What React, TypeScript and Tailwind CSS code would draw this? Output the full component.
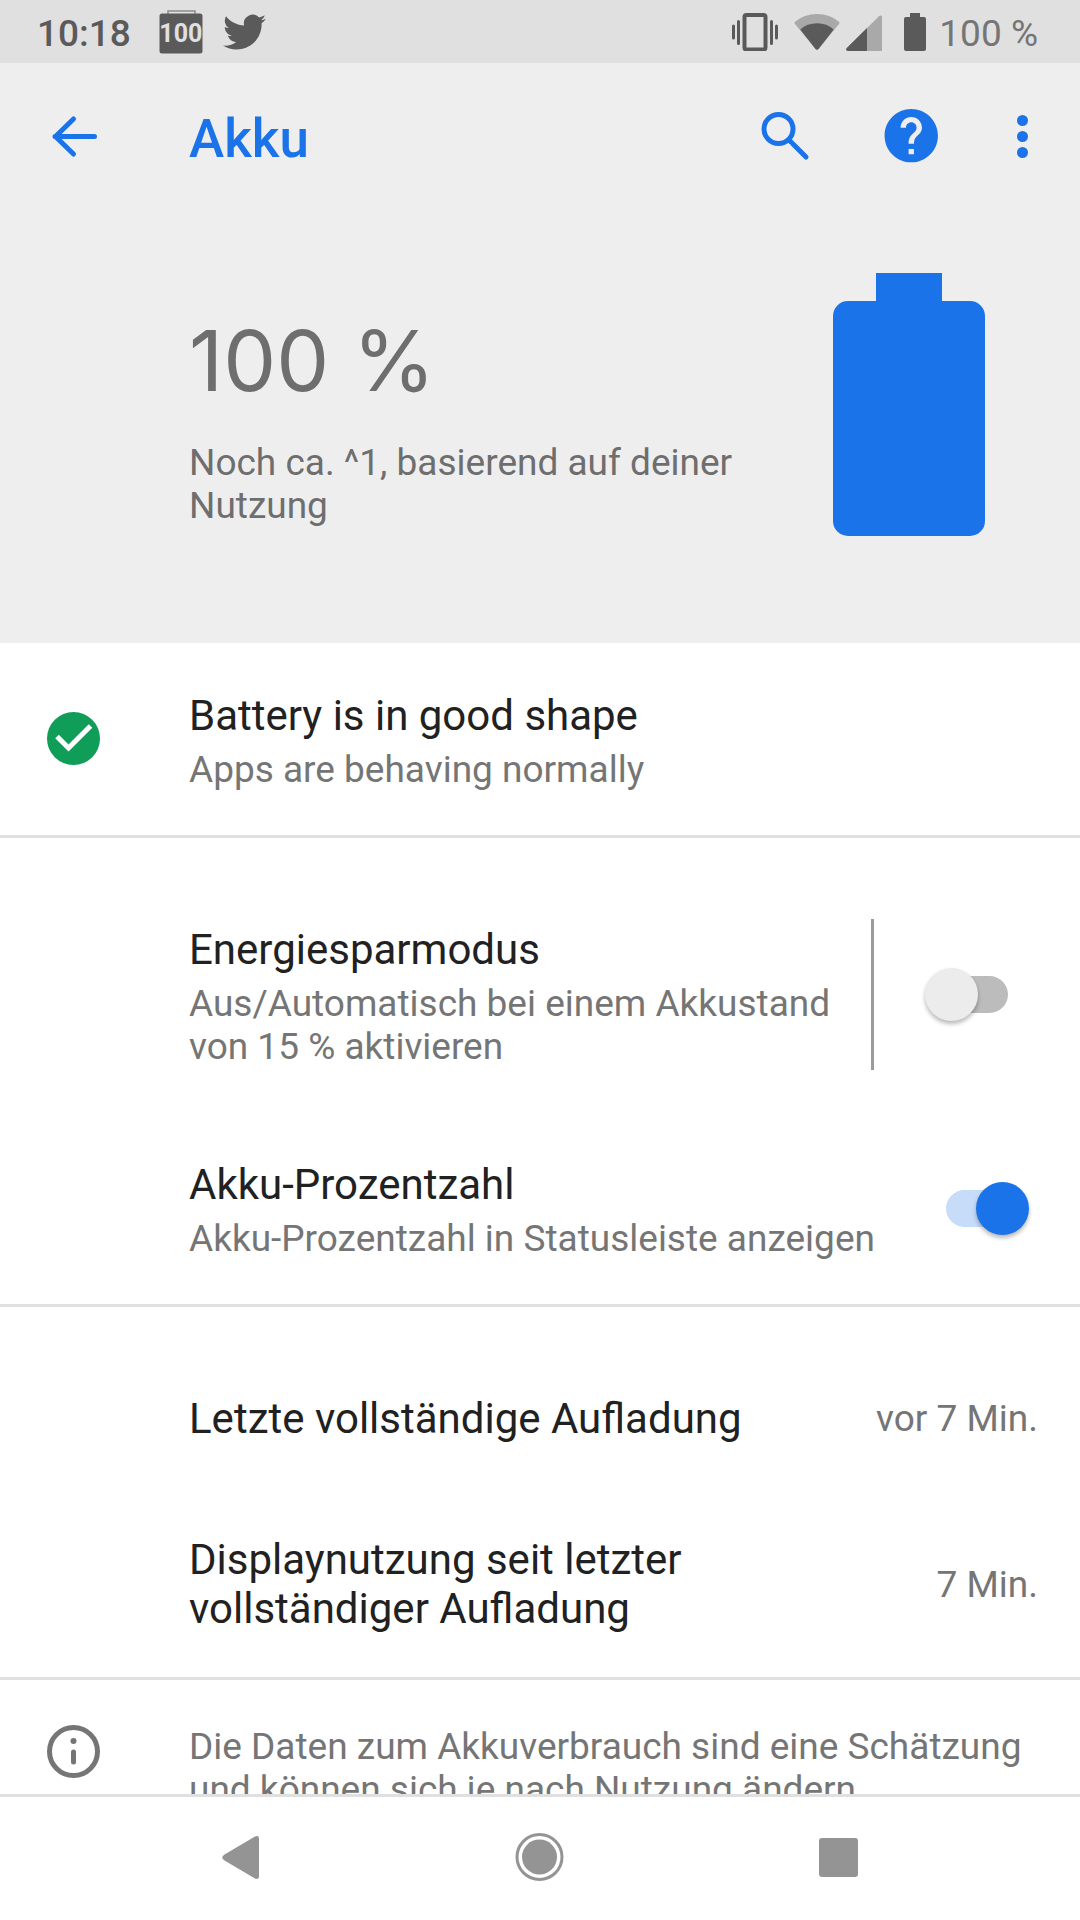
import React, { useState } from "react";

const TITLE = "text-[42px] leading-[49px] text-[#212121]";
const BODY = "text-[37px] leading-[43px] text-[#757575]";

function StatusBar() {
  return (
    <div className="flex h-[63px] shrink-0 items-center justify-between bg-[#e0e0e0] pl-[37px] pr-[42px] text-[37px] leading-[43px]">
      <div className="flex items-center">
        <span className="pt-[3px] font-medium text-[#5a5a5a]">10:18</span>
        <span className="relative ml-7 block h-11 w-11">
          <svg viewBox="0 0 44 44" className="h-11 w-11" fill="none">
            <path d="M9 4V1h27v3" stroke="#8a8a8a" strokeWidth="1.5" />
            <rect x="0.5" y="3.5" width="43" height="40" rx="2.5" fill="#5a5a5a" />
          </svg>
          <span className="absolute inset-0 flex items-center justify-center pt-1 text-[25px] leading-none font-bold text-[#e0e0e0]">
            100
          </span>
        </span>
        <svg viewBox="0 0 24 20" className="ml-5 mt-px h-[36px] w-[43px]" fill="#5a5a5a">
          <path d="M23.95 2.6c-.9.4-1.8.66-2.8.78 1-.6 1.8-1.56 2.16-2.7-.95.56-2 .97-3.12 1.2A4.92 4.92 0 0 0 11.8 6.35C7.7 6.16 4.1 4.2 1.67 1.2A4.9 4.9 0 0 0 3.2 7.75c-.8-.02-1.57-.24-2.23-.6v.06c0 2.38 1.7 4.37 3.95 4.82-.7.2-1.46.23-2.2.09a4.93 4.93 0 0 0 4.6 3.41A9.9 9.9 0 0 1 0 17.57a13.94 13.94 0 0 0 7.55 2.2c9.05 0 14-7.5 14-14 0-.2 0-.42-.02-.63.96-.7 1.8-1.56 2.42-2.54Z" />
        </svg>
      </div>
      <div className="flex items-center">
        <svg viewBox="0 0 46 38" className="h-[38px] w-[46px]" fill="none" stroke="#5a5a5a">
          <rect x="12.5" y="2" width="21" height="34.5" rx="2" strokeWidth="4" />
          <path d="M6.5 8.5v22M39.5 8.5v22M1.5 13v12M44.5 13v12" strokeWidth="3" strokeLinecap="round" />
        </svg>
        <svg viewBox="0 0 46 38" className="ml-4 h-[38px] w-[46px]">
          <path d="M1 8.8Q10 1 23 1t22 7.8q.8 1 .2 2L24.5 36q-1.5 1.5-3 0L.8 10.8q-.6-1 .2-2Z" fill="#a9a9a9" />
          <path d="M6.3 16.5Q13 10.2 23 10.2t16.7 6.3L24.5 36q-1.5 1.5-3 0Z" fill="#5a5a5a" />
        </svg>
        <svg viewBox="0 0 36 36" className="ml-[6px] mt-[2px] h-[36px] w-[36px]">
          <path d="M36 36H2q-3-.6-1.200-3L33 1.200Q35.500-.5 36 2Z" fill="#a9a9a9" />
          <path d="M21 13v23H2q-3-.6-1.200-3Z" fill="#5a5a5a" />
        </svg>
        <svg viewBox="0 0 22 38" className="ml-[22px] h-[38px] w-[22px]" fill="#5a5a5a">
          <path d="M6 0h10v4h4q2 0 2 2v30q0 2-2 2H2q-2 0-2-2V6q0-2 2-2h4Z" />
        </svg>
        <span className="ml-[13px] pt-[3px] text-[#757575]">100 %</span>
      </div>
    </div>
  );
}

function AppBar() {
  return (
    <header className="flex h-[147px] shrink-0 items-center bg-[#eeeeee] pl-[42px] pr-[28px]">
      <button type="button" aria-label="Zurück" className="h-[63px] w-[63px]">
        <svg viewBox="0 0 63 63" fill="none" stroke="#1a73e8" strokeWidth="5" strokeLinecap="round" strokeLinejoin="round">
          <path d="M52.5 31.5H13M31.5 14 13.5 31.500l18 17.500" />
        </svg>
      </button>
      <h1 className="ml-[84px] flex-1 pt-1 text-[53px] leading-[62px] font-medium text-[#1a73e8]">Akku</h1>
      <button type="button" aria-label="Suchen" className="h-[64px] w-[64px]">
        <svg viewBox="0 0 64 64" fill="none" stroke="#1a73e8" strokeWidth="5">
          <circle cx="25.5" cy="24" r="14.5" />
          <path d="m35.5 34.5 3 3" />
          <path d="m39.5 38.5 13.5 13.5" strokeLinecap="round" />
        </svg>
      </button>
      <button type="button" aria-label="Hilfe" className="ml-[62px] h-[64px] w-[64px]">
        <svg viewBox="-0.1 0.5 24 24" fill="#1a73e8">
          <path d="M12 2C6.480 2 2 6.480 2 12s4.480 10 10 10 10-4.480 10-10S17.520 2 12 2zm1 17h-2v-2h2v2zm2.070-7.750-.9.920C13.450 12.900 13 13.500 13 15h-2v-.5c0-1.100.450-2.100 1.170-2.830l1.240-1.260c.370-.360.590-.860.590-1.410 0-1.100-.9-2-2-2s-2 .9-2 2H8c0-2.210 1.790-4 4-4s4 1.790 4 4c0 .880-.360 1.680-.930 2.250z" />
        </svg>
      </button>
      <button type="button" aria-label="Weitere Optionen" className="ml-[65px] h-[60px] w-[44px]">
        <svg viewBox="0 0 44 60" fill="#1a73e8">
          <circle cx="14.5" cy="13.5" r="5.5" />
          <circle cx="14.5" cy="29.5" r="5.5" />
          <circle cx="14.5" cy="45.5" r="5.5" />
        </svg>
      </button>
    </header>
  );
}

function Hero() {
  return (
    <section className="flex items-start justify-between bg-[#eeeeee] pt-[63px] pr-[95px] pb-[107px] pl-[189px]">
      <div className="min-w-0 flex-1 pt-[46px] text-[#6e6e6e]">
        <p className="font-['Inter',sans-serif] text-[84px] leading-[84px]">100 %</p>
        <p className="mt-[38px] text-[37px] leading-[43px]">Noch ca. ^1, basierend auf deiner Nutzung</p>
      </div>
      <svg viewBox="0 0 152 263" className="h-[263px] w-[152px] shrink-0" fill="#1a73e8" role="img" aria-label="Akku 100 %">
        <rect x="43" width="66" height="40" />
        <rect y="28" width="152" height="235" rx="15" />
      </svg>
    </section>
  );
}

function Switch({ id, initial }: { id: string; initial: boolean }) {
  const [on, setOn] = useState(initial);
  return (
    <input
      id={id}
      type="checkbox"
      role="switch"
      checked={on}
      onChange={() => setOn(!on)}
      className="relative h-[53px] w-[83px] shrink-0 cursor-pointer appearance-none before:absolute before:top-2 before:right-0 before:h-[37px] before:w-[74px] before:rounded-full before:bg-[#bcbcbc] after:absolute after:top-0 after:left-0 after:h-[53px] after:w-[53px] after:rounded-full after:bg-[#ececec] after:shadow-[0_3px_4px_rgba(0,0,0,0.28)] checked:before:right-auto checked:before:left-0 checked:before:bg-[#c6dcf9] checked:after:right-0 checked:after:left-auto checked:after:bg-[#1a73e8]"
    />
  );
}

function ValueRow({ title, value }: { title: string; value: string }) {
  return (
    <div className="flex items-center justify-between pt-12 pr-[42px] pb-11 pl-[189px]">
      <dt className={`${TITLE} max-w-[70%]`}>{title}</dt>
      <dd className={`${BODY} shrink-0`}>{value}</dd>
    </div>
  );
}

function NavBar() {
  return (
    <nav className="flex h-[126px] shrink-0 items-center justify-center gap-[239px] border-t-[3px] border-[#e0e0e0] bg-white">
      <button type="button" aria-label="Zurück" className="h-[60px] w-[60px]">
        <svg viewBox="0 0 60 60" fill="#949494">
          <path d="M13.5 25.5 44 7.500q4-1.500 4 2v38q0 3.500-4 2L13.500 31.500q-4.500-3 0-6Z" />
        </svg>
      </button>
      <button type="button" aria-label="Startbildschirm" className="h-[60px] w-[60px]">
        <svg viewBox="0 0 60 60" fill="#949494">
          <circle cx="29.5" cy="28" r="22.5" fill="none" stroke="#949494" strokeWidth="3" />
          <circle cx="29.5" cy="28" r="17.5" />
        </svg>
      </button>
      <button type="button" aria-label="Letzte Apps" className="h-[60px] w-[60px]">
        <svg viewBox="0 0 60 60" fill="#949494">
          <rect x="10" y="9" width="39" height="39" rx="3" />
        </svg>
      </button>
    </nav>
  );
}

export default function App() {
  return (
    <div className="flex h-screen flex-col bg-white font-['Roboto',sans-serif]">
      <StatusBar />
      <AppBar />
      <main className="min-h-0 flex-1 overflow-y-auto [scrollbar-width:none]">
        <Hero />

        <section className="flex items-center border-b-[3px] border-[#e0e0e0] pt-12 pr-[42px] pb-11">
          <div className="flex w-[189px] shrink-0 pl-[42px]">
            <svg viewBox="0 0 63 63" className="h-[63px] w-[63px]">
              <circle cx="31.5" cy="28.5" r="26.5" fill="#0f9d58" />
              <path d="M15 26.500 26.500 38l22-22" fill="none" stroke="#fff" strokeWidth="5" />
            </svg>
          </div>
          <div>
            <h2 className={TITLE}>Battery is in good shape</h2>
            <p className={`${BODY} mt-2`}>Apps are behaving normally</p>
          </div>
        </section>

        <section className="border-b-[3px] border-[#e0e0e0] pt-[39px]">
          <div className="flex items-center pr-[72px] pl-[189px]">
            <label htmlFor="saver" className="flex-1 pt-12 pb-11">
              <span className={`${TITLE} block`}>Energiesparmodus</span>
              <span className={`${BODY} mt-2 block`}>Aus/Automatisch bei einem Akkustand von 15 % aktivieren</span>
            </label>
            <span className="mr-[51px] ml-6 h-[151px] w-[3px] shrink-0 bg-[#9b9b9b]" />
            <Switch id="saver" initial={false} />
          </div>
          <div className="flex items-center pr-[51px] pl-[189px]">
            <label htmlFor="percent" className="flex-1 pt-12 pb-11">
              <span className={`${TITLE} block`}>Akku-Prozentzahl</span>
              <span className={`${BODY} mt-2 block`}>Akku-Prozentzahl in Statusleiste anzeigen</span>
            </label>
            <Switch id="percent" initial={true} />
          </div>
        </section>

        <dl className="border-b-[3px] border-[#e0e0e0] pt-[39px]">
          <ValueRow title="Letzte vollständige Aufladung" value="vor 7 Min." />
          <ValueRow title="Displaynutzung seit letzter vollständiger Aufladung" value="7 Min." />
        </dl>

        <section className="flex items-start pt-[45px] pr-[42px] pb-11">
          <div className="flex w-[189px] shrink-0 pl-[42px]">
            <svg viewBox="0 0 63 54" className="h-[54px] w-[63px]" fill="#757575">
              <circle cx="31.5" cy="26.5" r="24" fill="none" stroke="#757575" strokeWidth="5" />
              <circle cx="31.5" cy="16" r="3" />
              <path d="M31.5 27v10" stroke="#757575" strokeWidth="5" strokeLinecap="round" />
            </svg>
          </div>
          <p className={BODY}>Die Daten zum Akkuverbrauch sind eine Schätzung und können sich je nach Nutzung ändern</p>
        </section>
      </main>
      <NavBar />
    </div>
  );
}
